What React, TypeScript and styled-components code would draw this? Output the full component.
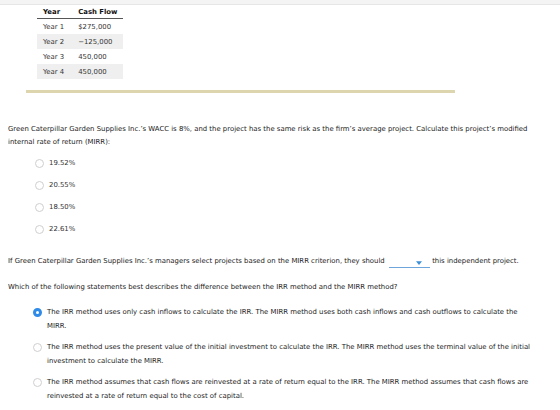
import React from "react";
import styled, { createGlobalStyle } from "styled-components";

const GlobalStyle = createGlobalStyle`
  html, body {
    margin: 0;
    padding: 0;
    background: #ffffff;
  }
  body {
    font-family: "DejaVu Sans", Verdana, sans-serif;
    font-size: 6.9px;
    color: #222222;
  }
`;

const rows = [
  { year: "Year 1", flow: "$275,000" },
  { year: "Year 2", flow: "\u2212125,000" },
  { year: "Year 3", flow: "450,000" },
  { year: "Year 4", flow: "450,000" },
];

const rates = ["19.52%", "20.55%", "18.50%", "22.61%"];

const statements = [
  "The IRR method uses only cash inflows to calculate the IRR. The MIRR method uses both cash inflows and cash outflows to calculate the MIRR.",
  "The IRR method uses the present value of the initial investment to calculate the IRR. The MIRR method uses the terminal value of the initial investment to calculate the MIRR.",
  "The IRR method assumes that cash flows are reinvested at a rate of return equal to the IRR. The MIRR method assumes that cash flows are reinvested at a rate of return equal to the cost of capital.",
];

export default function App() {
  return (
    <>
      <GlobalStyle />
      <TopStrip />
      <Page>
        <FlowTable>
          <thead>
            <tr>
              <HeadCell>Year</HeadCell>
              <HeadCell>Cash Flow</HeadCell>
            </tr>
          </thead>
          <tbody>
            {rows.map((r, i) => (
              <Row key={r.year} $shaded={i % 2 === 1}>
                <Cell>{r.year}</Cell>
                <Cell>{r.flow}</Cell>
              </Row>
            ))}
          </tbody>
        </FlowTable>

        <Divider />

        <Question>
          Green Caterpillar Garden Supplies Inc.’s WACC is 8%, and the project
          has the same risk as the firm’s average project. Calculate this
          project’s modified internal rate of return (MIRR):
        </Question>

        <RateList>
          {rates.map((r) => (
            <RateOption key={r}>
              <Radio />
              <span>{r}</span>
            </RateOption>
          ))}
        </RateList>

        <Sentence>
          If Green Caterpillar Garden Supplies Inc.’s managers select projects
          based on the MIRR criterion, they should{" "}
          <Dropdown>
            <Arrow viewBox="0 0 8 5">
              <path d="M0 0 L8 0 L4 5 Z" fill="#3d8fd8" />
            </Arrow>
          </Dropdown>{" "}
          this independent project.
        </Sentence>

        <Prompt>
          Which of the following statements best describes the difference
          between the IRR method and the MIRR method?
        </Prompt>

        <StatementList>
          {statements.map((s, i) => (
            <Statement key={i}>
              <Radio $checked={i === 0} />
              <StatementText>{s}</StatementText>
            </Statement>
          ))}
        </StatementList>
      </Page>
    </>
  );
}

const TopStrip = styled.div`
  height: 4px;
  background: #f4f4f4;
  border-bottom: 1px solid #e6e6e6;
`;

const Page = styled.div`
  padding: 0 8px;
  display: flex;
  flex-direction: column;
`;

const FlowTable = styled.table`
  align-self: flex-start;
  border-collapse: collapse;
  margin-left: 29px;
  margin-top: 1px;
`;

const HeadCell = styled.th`
  text-align: left;
  font-weight: bold;
  color: #111;
  padding: 2px 6px 2px 6px;
  border-bottom: 1px solid #555;
  &:first-child {
    padding-right: 8px;
  }
`;

const Row = styled.tr<{ $shaded?: boolean }>`
  background: ${(p) => (p.$shaded ? "#efefef" : "transparent")};
`;

const Cell = styled.td`
  padding: 0 6px;
  height: 15px;
  color: #333;
  &:first-child {
    padding-right: 8px;
  }
`;

const Divider = styled.div`
  margin: 11px 97px 0 18px;
  height: 3px;
  background: #ddd5ae;
`;

const Question = styled.p`
  margin: 30px 0 0 0;
  line-height: 13px;
`;

const RateList = styled.div`
  display: flex;
  flex-direction: column;
  gap: 12px;
  margin: 9px 0 0 27px;
`;

const RateOption = styled.label`
  display: flex;
  align-items: center;
  gap: 5px;
  height: 10px;
  color: #333;
`;

const Radio = styled.span<{ $checked?: boolean }>`
  flex: none;
  width: 9px;
  height: 9px;
  border-radius: 50%;
  box-sizing: border-box;
  border: ${(p) => (p.$checked ? "3px solid #2f8ae8" : "1px solid #cfcfcf")};
  background: #fff;
`;

const Sentence = styled.p`
  margin: 21px 0 0 0;
  line-height: 13px;
`;

const Dropdown = styled.span`
  display: inline-flex;
  justify-content: flex-end;
  align-items: center;
  vertical-align: -2px;
  width: 41px;
  height: 9px;
  margin-left: 2px;
  border-bottom: 1px solid #6ea6dc;
  padding-right: 8px;
  box-sizing: border-box;
`;

const Arrow = styled.svg`
  width: 6px;
  height: 4px;
`;

const Prompt = styled.p`
  margin: 13px 0 0 0;
  line-height: 13px;
`;

const StatementList = styled.div`
  display: flex;
  flex-direction: column;
  gap: 10px;
  margin: 14px 14px 0 25px;
`;

const Statement = styled.label`
  display: flex;
  align-items: flex-start;
  gap: 5px;
`;

const StatementText = styled.span`
  line-height: 14px;
  color: #222;
  margin-top: -3px;
`;
